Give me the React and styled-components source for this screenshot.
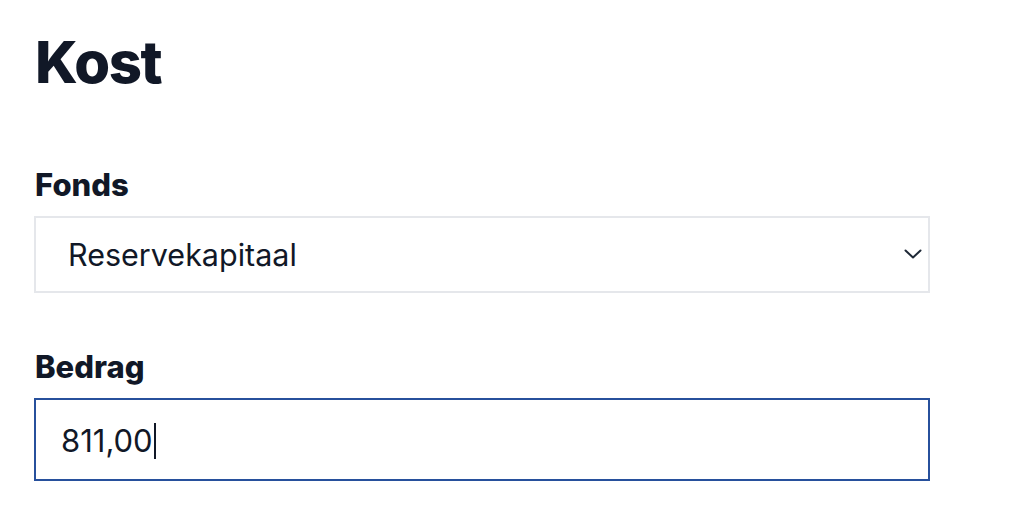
import React from "react";
import styled, { createGlobalStyle } from "styled-components";

const Global = createGlobalStyle`
  body {
    margin: 0;
    background: #fff;
    font-family: Inter, "Noto Sans", sans-serif;
    color: #111827;
  }
`;

function Chevron() {
  return (
    <svg width="18" height="10" viewBox="0 0 18 10" fill="none">
      <path d="M1.5 1.5l7.5 7 7.5-7" stroke="#1f2937" strokeWidth="2" strokeLinecap="round" strokeLinejoin="round" />
    </svg>
  );
}

export default function App() {
  return (
    <Page>
      <Global />
      <Title>Kost</Title>
      <Field>
        <Label htmlFor="fonds">Fonds</Label>
        <SelectWrap>
          <Select id="fonds" defaultValue="reserve">
            <option value="reserve">Reservekapitaal</option>
          </Select>
          <Arrow>
            <Chevron />
          </Arrow>
        </SelectWrap>
      </Field>
      <Field>
        <Label>Bedrag</Label>
        <Input>
          811,00
          <Caret />
        </Input>
      </Field>
    </Page>
  );
}

const Page = styled.div`
  padding: 27px 0 0 34px;
  width: 896px;
  display: flex;
  flex-direction: column;
`;

const Title = styled.h1`
  margin: 0 0 70px 1px;
  font-size: 58px;
  line-height: 70px;
  font-weight: 800;
  letter-spacing: -1.4px;
`;

const Field = styled.div`
  display: flex;
  flex-direction: column;
  gap: 13px;
  margin-bottom: 56px;
`;

const Label = styled.label`
  margin-left: 1px;
  font-size: 31px;
  line-height: 36px;
  font-weight: 800;
  letter-spacing: 0;
`;

const SelectWrap = styled.div`
  position: relative;
`;

const Select = styled.select`
  appearance: none;
  width: 100%;
  height: 77px;
  box-sizing: border-box;
  border: 2px solid #e5e7eb;
  border-radius: 0;
  background: #fff;
  padding: 0 0 0 32px;
  font-family: inherit;
  font-size: 30.5px;
  color: #111827;
  outline: none;
`;

const Arrow = styled.span`
  position: absolute;
  right: 8px;
  top: 33px;
  display: flex;
  pointer-events: none;
`;

const Input = styled.div`
  height: 83px;
  box-sizing: border-box;
  border: 2px solid #27509c;
  padding: 2px 0 0 25px;
  display: flex;
  align-items: center;
  font-size: 31px;
  color: #111827;
`;

const Caret = styled.span`
  width: 2px;
  height: 36px;
  margin-left: 1px;
  background: #111827;
`;
